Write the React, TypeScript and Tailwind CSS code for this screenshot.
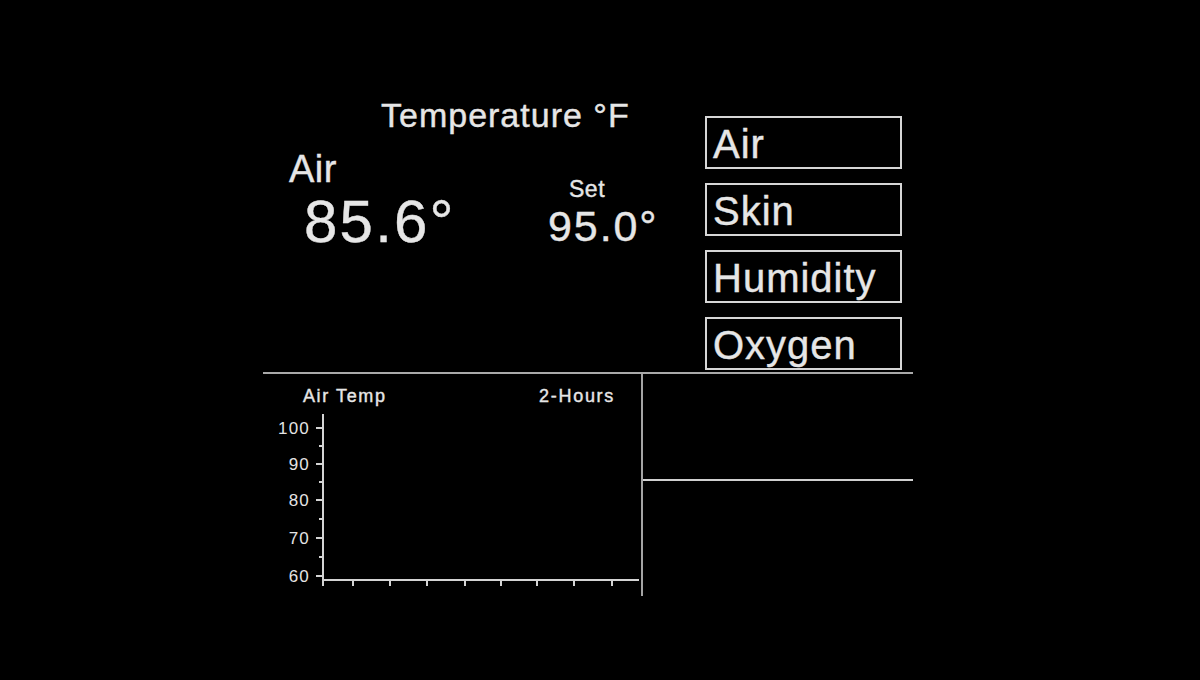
import React from "react";

const font = { fontFamily: '"Liberation Sans", Arial, sans-serif' };

function Chart() {
  const majors = [
    { y: 23, label: "100" },
    { y: 59, label: "90" },
    { y: 95, label: "80" },
    { y: 133, label: "70" },
    { y: 171, label: "60" },
  ];
  const minors = [41, 77, 114, 152];
  const xt = [90, 127, 164, 202, 238, 274, 311, 349];
  return (
    <svg width="378" height="185" viewBox="0 0 378 185" className="block">
      <g stroke="#d4d4d4" strokeWidth="2" fill="none">
        <line x1="60" y1="9" x2="60" y2="181" />
        <line x1="59" y1="175" x2="376" y2="175" />
        {majors.map((m) => (
          <line key={m.y} x1="53" y1={m.y} x2="60" y2={m.y} />
        ))}
        {minors.map((y) => (
          <line key={y} x1="56" y1={y} x2="60" y2={y} />
        ))}
        {xt.map((x) => (
          <line key={x} x1={x} y1="175" x2={x} y2="181" />
        ))}
      </g>
      <g fill="#e4e4e4" fontSize="17" style={{ ...font, letterSpacing: "1.2px" }}>
        {majors.map((m) => (
          <text key={m.label} x="47" y={m.y + 6} textAnchor="end">
            {m.label}
          </text>
        ))}
      </g>
    </svg>
  );
}

export default function App() {
  const buttons = ["Air", "Skin", "Humidity", "Oxygen"];
  return (
    <div
      className="w-[1200px] h-[680px] bg-black text-[#e6e6e6] overflow-hidden [-webkit-text-stroke:0.4px_#e6e6e6]"
      style={font}
    >
      <div className="ml-[263px] w-[650px] flex flex-col">
        {/* top */}
        <div className="h-[372px] flex">
          <div className="w-[442px] flex flex-col">
            <div className="pt-[98px] pl-[118px] text-[34px] leading-none tracking-[1px]">
              Temperature °F
            </div>
            <div className="mt-[18px] flex items-start">
              <div className="w-[285px] pl-[26px] flex flex-col">
                <div className="text-[38px] leading-none tracking-[0.5px]">Air</div>
                <div className="mt-[4px] ml-[15px] text-[60px] leading-none tracking-[2.2px]">85.6°</div>
              </div>
              <div className="mt-[28px] flex flex-col">
                <div className="pl-[21px] text-[23px] leading-none tracking-[0.5px]">Set</div>
                <div className="mt-[4px] text-[43px] leading-none tracking-[1.9px]">95.0°</div>
              </div>
            </div>
          </div>
          <div className="pt-[116px] flex flex-col gap-[14px] w-[197px]">
            {buttons.map((b) => (
              <div
                key={b}
                className="h-[53px] border-2 border-[#d6d6d6] pl-[6px] pt-[6px] text-[40px] leading-none tracking-[1px]"
              >
                {b}
              </div>
            ))}
          </div>
        </div>
        <div className="h-[2px] bg-[#a9a9a9]" />
        {/* bottom */}
        <div className="h-[222px] flex">
          <div className="w-[378px] flex flex-col">
            <div className="pt-[13px] pl-[40px] pr-[26px] flex justify-between text-[18px] leading-none">
              <span className="tracking-[1.6px]">Air Temp</span>
              <span className="tracking-[1.7px]">2-Hours</span>
            </div>
            <Chart />
          </div>
          <div className="w-[2px] bg-[#a4a4a4]" />
          <div className="flex-1">
            <div className="mt-[105px] h-[2px] bg-[#d0d0d0]" />
          </div>
        </div>
      </div>
    </div>
  );
}
